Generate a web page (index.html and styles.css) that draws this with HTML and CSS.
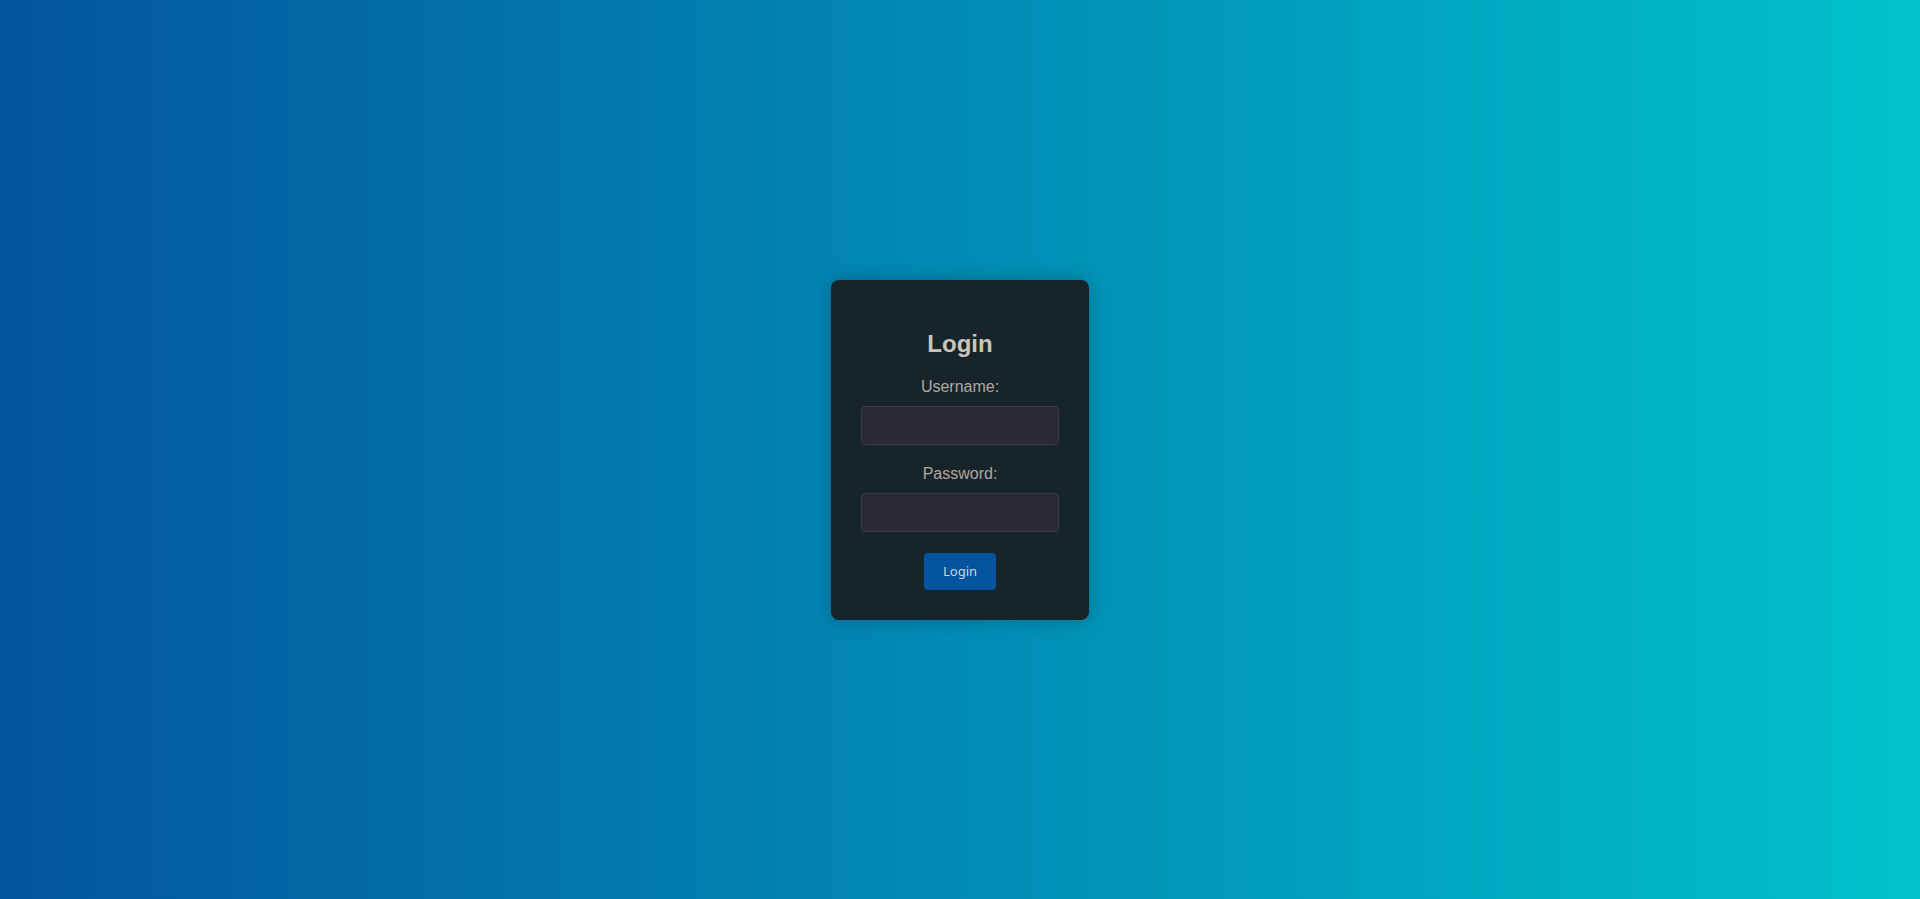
FILE: index.html
```html
<!DOCTYPE html>
<html lang="en">
<head>
<meta charset="utf-8">
<title>Login</title>
<link rel="stylesheet" href="styles.css">
</head>
<body>
<main class="page">
  <form class="card">
    <h2 class="title">Login</h2>
    <label class="label" for="username">Username:</label>
    <input class="field" id="username" type="text">
    <label class="label" for="password">Password:</label>
    <input class="field" id="password" type="password">
    <button class="btn" type="button">Login</button>
  </form>
</main>
</body>
</html>
```

FILE: styles.css
```css
html, body {
  margin: 0;
  padding: 0;
  height: 100%;
}
body {
  font-family: "Liberation Sans", Arial, sans-serif;
  background: linear-gradient(to right, #03559e, #00c2cc);
}
.page {
  min-height: 100vh;
  display: flex;
  align-items: center;
  justify-content: center;
}
.card {
  background: #172429;
  padding: 30px;
  border-radius: 8px;
  box-shadow: 0 0 18px rgba(0, 0, 0, 0.25);
  display: flex;
  flex-direction: column;
  align-items: center;
  width: 198px;
}
.title {
  font-size: 24px;
  font-weight: bold;
  color: #c9c5be;
  margin: 20px 0;
  line-height: normal;
}
.label {
  display: block;
  font-size: 16px;
  line-height: normal;
  color: #aea9a1;
  margin-bottom: 10px;
}
.field {
  box-sizing: border-box;
  width: 198px;
  height: 39px;
  margin: 0 0 20px;
  padding: 10px;
  background: #2b2932;
  border: 1px solid #3b3d40;
  border-radius: 4px;
  color: #ccc;
  font-size: 14px;
  outline: none;
}
.field:last-of-type {
  margin-bottom: 21px;
}
.btn {
  box-sizing: border-box;
  height: 37px;
  padding: 0 19px;
  background: #0454a0;
  color: #d6d3ce;
  border: none;
  border-radius: 4px;
  font-family: "Noto Sans", sans-serif;
  font-size: 13px;
  cursor: pointer;
}
```
